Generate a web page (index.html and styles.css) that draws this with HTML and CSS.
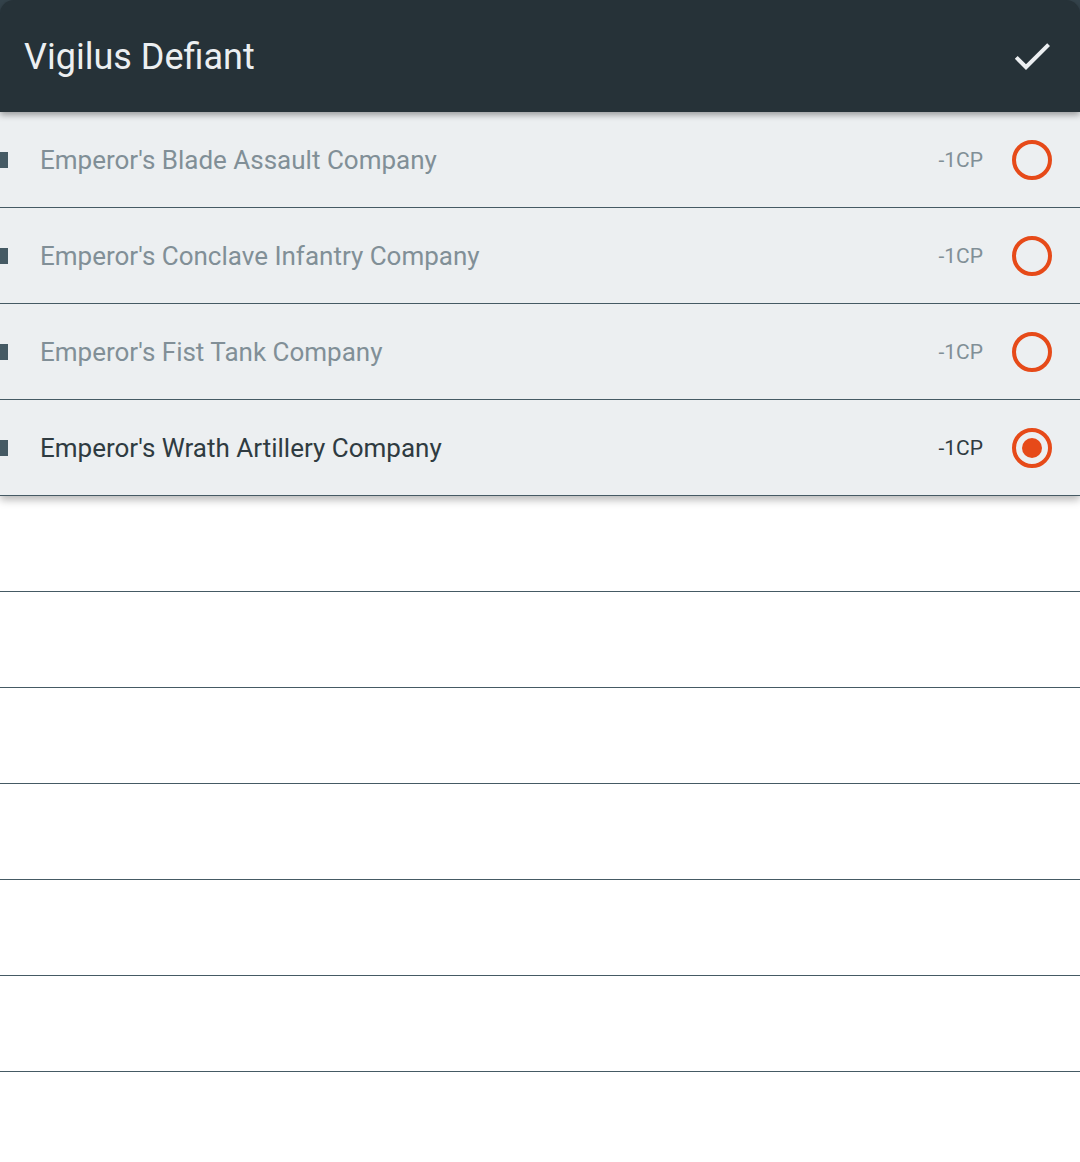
FILE: index.html
```html
<!DOCTYPE html>
<html>
<head>
<meta charset="utf-8">
<link rel="stylesheet" href="styles.css">
</head>
<body>
<div class="app">
  <div class="top">
    <header class="bar">
      <h1 class="title">Vigilus Defiant</h1>
      <svg class="check" viewBox="0 0 24 24" width="48" height="48"><path d="M9 16.17L4.83 12l-1.42 1.41L9 19 21 7l-1.41-1.41z" fill="#eceff1"/></svg>
    </header>
  </div>
  <div class="options">
    <div class="opt">
      <span class="mark"></span>
      <span class="name">Emperor's Blade Assault Company</span>
      <span class="cp">-1CP</span>
      <span class="radio"></span>
    </div>
    <div class="opt">
      <span class="mark"></span>
      <span class="name">Emperor's Conclave Infantry Company</span>
      <span class="cp">-1CP</span>
      <span class="radio"></span>
    </div>
    <div class="opt">
      <span class="mark"></span>
      <span class="name">Emperor's Fist Tank Company</span>
      <span class="cp">-1CP</span>
      <span class="radio"></span>
    </div>
    <div class="opt selected">
      <span class="mark"></span>
      <span class="name">Emperor's Wrath Artillery Company</span>
      <span class="cp">-1CP</span>
      <span class="radio"><span class="dot"></span></span>
    </div>
  </div>
  <div class="blank"></div>
  <div class="blank"></div>
  <div class="blank"></div>
  <div class="blank"></div>
  <div class="blank"></div>
  <div class="blank"></div>
</div>
</body>
</html>
```
FILE: styles.css
```css
html, body {
  margin: 0;
  padding: 0;
  background: #ffffff;
}
body {
  font-family: Roboto, "Liberation Sans", sans-serif;
}
.app {
  width: 1080px;
  height: 1162px;
  overflow: hidden;
  background: #ffffff;
}
.top {
  background: #34434b;
  position: relative;
  z-index: 3;
}
.bar {
  height: 112px;
  background: #263238;
  border-radius: 14px 14px 0 0;
  display: flex;
  align-items: center;
  padding: 0 24px;
  box-shadow: 0 3px 6px rgba(0, 0, 0, 0.35);
}
.title {
  flex: 1;
  margin: 0;
  padding-top: 1px;
  font-weight: 400;
  font-size: 36px;
  color: #eceff1;
  letter-spacing: 0;
}
.check {
  display: block;
}
.options {
  position: relative;
  z-index: 2;
  box-shadow: 0 4px 8px rgba(0, 0, 0, 0.28);
}
.opt {
  height: 95px;
  border-bottom: 1px solid #455a64;
  background: #eceff1;
  display: flex;
  align-items: center;
  padding-right: 28px;
}
.mark {
  width: 8px;
  height: 16px;
  background: #455a64;
  margin-right: 32px;
}
.name {
  flex: 1;
  font-size: 26px;
  color: #818f97;
  padding-top: 1px;
}
.cp {
  font-size: 21px;
  color: #818f97;
  margin-right: 29px;
  padding-top: 1px;
}
.selected .name,
.selected .cp {
  color: #2f3b41;
}
.radio {
  width: 32px;
  height: 32px;
  border: 4px solid #e64a19;
  border-radius: 50%;
  display: flex;
  align-items: center;
  justify-content: center;
}
.dot {
  width: 20px;
  height: 20px;
  border-radius: 50%;
  background: #e64a19;
}
.blank {
  height: 95px;
  border-bottom: 1px solid #455a64;
}
```
